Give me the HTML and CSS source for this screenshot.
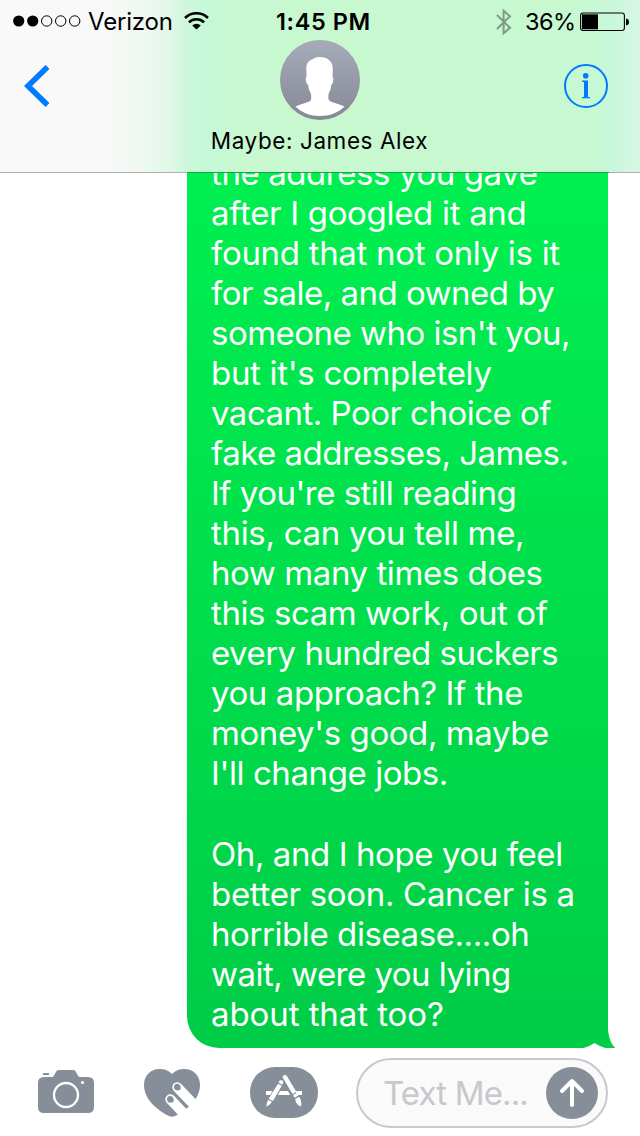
FILE: index.html
```html
<!DOCTYPE html>
<html lang="en">
<head>
<meta charset="utf-8">
<title>Messages</title>
<link rel="stylesheet" href="styles.css">
</head>
<body>
<div class="screen">
  <header class="header">
    <div class="status">
      <div class="status-left">
        <svg class="signal" width="68" height="12" viewBox="0 0 68 12"><circle cx="5.7" cy="6" r="5.6"/><circle cx="19.7" cy="6" r="5.6"/><g fill="none" stroke="#000"><circle cx="33.7" cy="6" r="5.2"/><circle cx="47.7" cy="6" r="5.2"/><circle cx="61.7" cy="6" r="5.2"/></g></svg>
        <span class="carrier">Verizon</span>
        <svg class="wifi" width="25" height="18" viewBox="0 0 25 18"><g fill="none" stroke="#000" stroke-width="2.6"><path d="M1 6a16.3 16.3 0 0 1 23 0"/><path d="M4.900 10.300a10.900 10.900 0 0 1 15.200 0"/></g><path d="M8.200 13.400a6.200 6.200 0 0 1 8.600 0l-4.300 4.200z"/></svg>
      </div>
      <div class="time">1:45 PM</div>
      <div class="status-right">
        <svg class="bluetooth" width="16" height="28" viewBox="0 0 16 28"><path d="M1 7l13 12.800-6.400 5.500V2.700L14 8.200 1 21" fill="none" stroke="#7c9b82" stroke-width="2"/></svg>
        <span class="percent">36%</span>
        <svg class="battery" width="49" height="20" viewBox="0 0 49 20"><rect x=".6" y="1" width="43.800" height="17.500" rx="2.500" fill="none" stroke="#000" stroke-width="1.100"/><rect x="2" y="2.300" width="16" height="15"/><path d="M46 6.500c2 .3 3 1.500 3 3.500s-1 3.200-3 3.500z"/></svg>
      </div>
    </div>
    <div class="nav">
      <svg class="back" width="28" height="44" viewBox="0 0 28 44"><path d="M24.500 3L5 22l19.500 19" fill="none" stroke="#007aff" stroke-width="5.600"/></svg>
      <div class="contact">
        <svg class="avatar" width="80" height="80" viewBox="0 0 80 80"><defs><linearGradient id="av" x2="0" y2="1"><stop stop-color="#a5abb9"/><stop offset="1" stop-color="#858993"/></linearGradient></defs><circle cx="40" cy="40" r="40" fill="url(#av)"/><path fill="#fff" d="M39.500 17c-3 0-5 .8-6.500 2-4.500 1.500-6.700 4.500-6.700 9.500l.3 8c-1.500.5-.7 7.800 1.600 8.500.2 2.800.8 5.500 2.300 7.500.8 2 .9 5.500.5 7.500-1.500 2.500-9 3.500-15.500 6.500C22 73 30.500 76 40 76s18-3 24.500-9.500c-6.500-3-14-4-15.700-6.500-.7-2-.6-5.500.2-7.500 1.500-2 2-4.700 2.200-7.500 2.200-.7 2.800-8 1.300-8.500l.3-8c0-7-5-11.500-13.300-11.500z"/></svg>
        <div class="name">Maybe: James Alex</div>
      </div>
      <svg class="info" width="44" height="44" viewBox="0 0 44 44"><circle cx="22" cy="22" r="21" fill="none" stroke="#007aff" stroke-width="2"/><g fill="#007aff"><circle cx="21.700" cy="11.800" r="2.800"/><path d="M18 16.500h6v16.500h2v1.200h-8v-1.200h2v-15h-2z"/></g></svg>
    </div>
  </header>
  <main class="chat">
    <div class="bubble">
      <p class="para"><span>the address you gave</span><span class="loose">after I googled it and</span><span class="loose">found that not only is it</span><span class="tight">for sale, and owned by</span><span class="tight">someone who isn't you,</span><span class="loose">but it's completely</span><span class="tight">vacant. Poor choice of</span><span class="tight">fake addresses, James.</span><span class="tight">If you're still reading</span><span class="loose">this, can you tell me,</span><span>how many times does</span><span>this scam work, out of</span><span class="tight">every hundred suckers</span><span>you approach? If the</span><span>money's good, maybe</span><span>I'll change jobs.</span></p>
      <p class="para"><span>Oh, and I hope you feel</span><span class="loose">better soon. Cancer is a</span><span>horrible disease....oh</span><span class="tight">wait, were you lying</span><span class="wide">about that too?</span></p>
      <svg class="tail" width="42" height="40" viewBox="0 0 42 40"><path d="M25.500 22H26c1 8 3 14 7.500 18h-8z" fill="#00cf48"/><path d="M1.500 40q6-1.500 11-5 5 3.500 11 5z" fill="#fff"/></svg>
    </div>
  </main>
  <footer class="toolbar">
    <svg class="camera" width="56" height="44" viewBox="0 0 56 44"><path fill="#868e99" d="M5 3h6v2H5zM6 7h8c3 0 3-7 7-7h14c4 0 4 7 7 7h8q6 0 6 6v24q0 6-6 6H6q-6 0-6-6V13q0-6 6-6z"/><circle cx="28" cy="25" r="12" fill="none" stroke="#fff" stroke-width="2.400"/><circle cx="44.500" cy="12.500" r="1.600" fill="#fff"/></svg>
    <svg class="heart" width="56" height="50" viewBox="0 0 56 50"><path fill="#868e99" d="M28 5C24 1 20 0 15.500 0 6 0 0 7 0 16c0 13 11 24 25 31q3 1.500 6 0C45 40 56 29 56 16 56 7 50 0 40.500 0 36 0 32 1 28 5z"/><g fill="none" stroke="#fff" stroke-width="10" stroke-linecap="round"><path d="M33.300 18.200L57 43"/><path d="M26.300 30.300L46 51"/></g><path fill="#868e99" d="M33 14.800q3 0 3.700 3.400l-.2 2.500-3 .8q-3.500-.3-3.500-3.300 0-3.200 3-3.400zM26 27q3 0 3.700 3.400l-.2 2.500-3 .8q-3.500-.3-3.500-3.300 0-3.200 3-3.400z"/></svg>
    <svg class="apps" width="68" height="51" viewBox="0 0 68 51"><rect width="68" height="51" rx="25" fill="#868e99"/><g fill="#fff"><path d="M16 24h6.500l-2.200 4H16zM30 24h8l2.200 4H28zM45.500 24H52v4h-4.500z"/><path d="M28.500 15.500l1-1.700q1.500-1.200 3-.2 1.200 1 .6 2.400l-1 1.800z"/><path d="M28 16.700l3.800 2.100L23 34l-4.300-2.300z"/><path d="M18.200 32.700l3.800 2q-1.800 3-5 4.800l-.6-.5q.2-3.500 1.800-6.300z"/><path d="M32.700 10.500q-.5-2 1.500-2.500 1.800-.3 2.800 1.200l9.300 15.600-3.800 2.300z"/><path d="M43 28l3.800-2.200 1.600 2.800-3.800 2.200z"/><path d="M45.200 32l4-2.200q3 4.500 1.800 9.700-5-1.500-5.800-7.500z"/></g></svg>
    <div class="field">
      <span class="placeholder">Text Me...</span>
      <svg class="send" width="52" height="52" viewBox="0 0 52 52"><circle cx="26" cy="26" r="26" fill="#868e99"/><path d="M26 38V14M16 24l10-10 10 10" fill="none" stroke="#fff" stroke-width="4" stroke-linecap="round" stroke-linejoin="round"/></svg>
    </div>
  </footer>
</div>
</body>
</html>
```
FILE: styles.css
```css
* { box-sizing: border-box; }
body { margin: 0; background: #fff; font-family: Inter, "Noto Sans", sans-serif; color: #000; }
svg { display: block; flex: none; }
.screen { width: 640px; height: 1136px; display: flex; flex-direction: column; overflow: hidden; }
.header {
  height: 173px; flex: none; border-bottom: 1px solid #b2b2b2;
  border-image: linear-gradient(90deg, #b2b2b2 187px, #16a34b 187px, #16a34b 608px, #b2b2b2 608px) 1;
  background-image: linear-gradient(90deg, #f9f9f9 0, #f8f9f8 105px, #eff8f1 140px, #e2f8e8 170px, #d0f7dd 185px, #c5f8d8 202px, #c7f8d3 225px, #c8f8cf 250px, #c8f8cf 550px, #c7f8d4 595px, #c8f7dc 612px, #d8f7e4 640px);
}
.status { height: 40px; display: grid; grid-template-columns: 1fr 100px 1fr; align-items: center; font-size: 24px; line-height: 40px; white-space: nowrap; }
.status-left { display: flex; align-items: center; padding-left: 13px; }
.carrier { width: 84px; margin-left: 7px; padding-top: 2px; letter-spacing: -.2px; }
.wifi { margin-left: 12px; margin-top: -1px; }
.time { padding: 2px 0 0 6px; font-weight: 600; font-size: 23.500px; letter-spacing: .6px; }
.status-right { display: flex; align-items: center; justify-content: flex-end; padding-right: 11px; }
.bluetooth { margin-top: 1px; }
.percent { width: 48px; margin-left: 13px; padding-top: 2px; font-size: 23.500px; letter-spacing: -.6px; }
.battery { margin: 1px 0 0 7px; }
.nav { height: 132px; display: flex; align-items: flex-start; justify-content: space-between; padding: 0 32px 0 23px; }
.back { margin: 24px 24px 0 0; }
.contact { display: flex; flex-direction: column; align-items: center; width: 240px; }
.name { padding-top: 1px; font-size: 22.500px; line-height: 40px; letter-spacing: .58px; white-space: nowrap; }
.info { margin-top: 24px; }
.chat { flex: 1; min-height: 0; overflow: hidden; display: flex; flex-direction: column; align-items: flex-end; padding-right: 16px; }
.bubble { position: relative; flex: none; width: 421px; height: 895px; margin: -20px 16px 0 0; padding-left: 24px; border-bottom-left-radius: 32px; background: linear-gradient(#00f050, #00cc47); color: #fff; font-size: 33px; line-height: 40px; letter-spacing: -.42px; }
.para { margin: 0 0 41px; }
.para span { display: block; white-space: nowrap; }
.para .tight { letter-spacing: -.52px; }
.para .loose { letter-spacing: -.31px; }
.para .wide { letter-spacing: -.08px; }
.tail { position: absolute; right: -16px; bottom: 0; }
.toolbar { height: 88px; flex: none; display: flex; align-items: flex-start; padding-left: 38px; }
.camera { margin-top: 22px; }
.heart { margin: 21px 0 0 50px; }
.apps { margin: 19px 0 0 50px; }
.field { width: 252px; height: 70px; margin: 10px 0 0 38px; border: 2px solid #c8c8cd; border-radius: 35px; background: #fafafa; display: flex; align-items: center; justify-content: space-between; padding: 0 8px 0 25px; }
.placeholder { font-size: 33px; line-height: 40px; letter-spacing: -.85px; color: #c7c7cc; white-space: nowrap; }
```
